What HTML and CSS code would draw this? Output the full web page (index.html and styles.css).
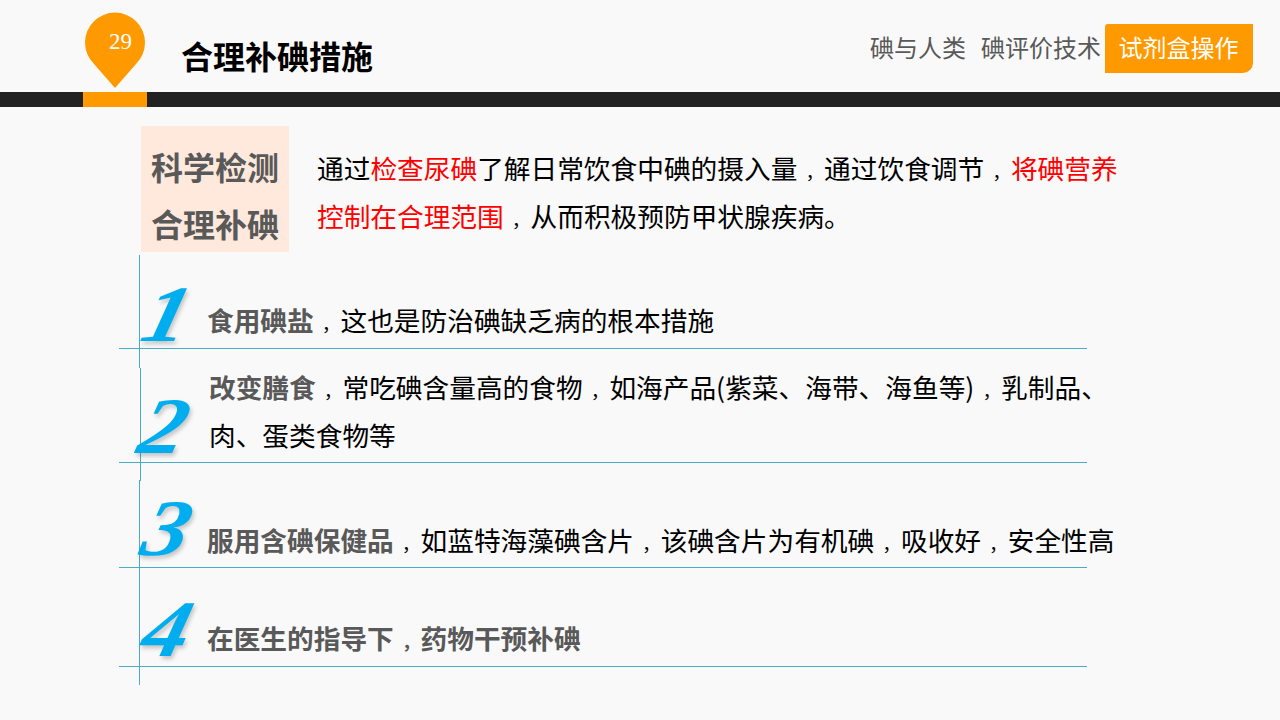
FILE: index.html
```html
<!DOCTYPE html>
<html lang="zh-CN">
<head>
<meta charset="utf-8">
<title>合理补碘措施</title>
<link rel="stylesheet" href="styles.css">
</head>
<body>
<header class="header">
  <div class="pin">
    <svg class="pin-shape" width="60" height="76" viewBox="0 0 60 76"><path d="M30 76 L9 52 A30 30 0 1 1 51 52 Z" fill="#ff9900"/></svg>
    <span class="pin-num">29</span>
  </div>
  <h1 class="title">合理补碘措施</h1>
  <nav class="nav">
    <span class="nav-item">碘与人类</span>
    <span class="nav-item">碘评价技术</span>
    <span class="nav-active">试剂盒操作</span>
  </nav>
</header>
<div class="bar"><span class="bar-mark"></span></div>
<main class="main">
  <section class="intro">
    <div class="badge">科学检测<br>合理补碘</div>
    <p class="intro-text">通过<em class="red">检查尿碘</em>了解日常饮食中碘的摄入量<i class="cm">，</i>通过饮食调节<i class="cm">，</i><em class="red">将碘营养<br>控制在合理范围</em><i class="cm">，</i>从而积极预防甲状腺疾病。</p>
  </section>
  <section class="list">
    <span class="vline vline-a"></span>
    <span class="vline vline-b"></span>
    <span class="vline vline-c"></span>
    <div class="row row-1"><span class="num">1</span><p class="row-text"><b>食用碘盐</b><i class="cm">，</i>这也是防治碘缺乏病的根本措施</p></div>
    <div class="row row-2"><span class="num">2</span><p class="row-text"><b>改变膳食</b><i class="cm">，</i>常吃碘含量高的食物<i class="cm">，</i>如海产品(紫菜、海带、海鱼等)<i class="cm">，</i>乳制品、<br>肉、蛋类食物等</p></div>
    <div class="row row-3"><span class="num">3</span><p class="row-text"><b>服用含碘保健品</b><i class="cm">，</i>如蓝特海藻碘含片<i class="cm">，</i>该碘含片为有机碘<i class="cm">，</i>吸收好<i class="cm">，</i>安全性高</p></div>
    <div class="row row-4"><span class="num">4</span><p class="row-text"><b>在医生的指导下<i class="cm">，</i>药物干预补碘</b></p></div>
  </section>
</main>
</body>
</html>
```
FILE: styles.css
```css
* { box-sizing: border-box; }
html, body { margin: 0; padding: 0; }
body {
  width: 1280px;
  height: 720px;
  overflow: hidden;
  background: #f9f9f9;
  color: #000;
  font-family: "Noto Sans CJK SC", "Liberation Sans", sans-serif;
}
p, h1 { margin: 0; }
em { font-style: normal; }
.cm {
  font-style: normal;
  font-size: 0.7em;
  line-height: 1;
  padding-left: 0.43em;
}

.header {
  height: 92px;
  display: flex;
  align-items: flex-start;
  padding-left: 85px;
  padding-right: 27px;
}
.pin {
  position: relative;
  width: 60px;
  height: 76px;
  margin-top: 12px;
  flex: none;
}
.pin-shape { display: block; }
.pin-num {
  position: absolute;
  left: 24px;
  top: 17px;
  font: 23px/26px "Liberation Serif", serif;
  color: #fff;
}
.title {
  margin-left: 36px;
  margin-top: 32px;
  font-size: 32px;
  line-height: 46px;
  font-weight: 700;
}
.nav {
  margin-left: auto;
  margin-top: 24px;
  display: flex;
  align-items: flex-start;
  font-size: 24px;
  line-height: 45px;
  color: #595959;
}
.nav-item { margin-right: 15px; }
.nav-item + .nav-item { margin-right: 4px; }
.nav-active {
  width: 148px;
  height: 49px;
  padding-right: 1px;
  text-align: center;
  color: #fff;
  background: #ff9900;
  border-radius: 3px 0 10px 0;
}

.bar { height: 15px; background: #222; }
.bar-mark {
  display: block;
  width: 64px;
  height: 15px;
  margin-left: 83px;
  background: #ff9900;
}

.main { padding: 19px 0 0 119px; }
.intro { display: flex; margin-left: 22px; }
.badge {
  width: 148px;
  height: 126px;
  flex: none;
  padding-top: 12px;
  text-align: center;
  font-size: 32px;
  line-height: 57px;
  font-weight: 700;
  color: #595959;
  background: #fee9dc;
}
.intro-text {
  margin-left: 28px;
  margin-top: 18px;
  font-size: 26.7px;
  line-height: 48px;
  white-space: nowrap;
}
.red { color: #ff0000; }

.list {
  position: relative;
  width: 968px;
  margin-top: 3px;
}
.vline {
  position: absolute;
  width: 1px;
  background: #4bacc6;
}
.vline-a { left: 20px; top: 0; height: 113px; }
.vline-b { left: 21px; top: 113px; height: 113px; }
.vline-c { left: 20px; top: 225px; height: 205px; }
.row {
  display: flex;
  border-bottom: 1px solid #4bacc6;
  white-space: nowrap;
}
.row-1 { height: 94px; }
.row-2 { height: 114px; }
.row-3 { height: 105px; }
.row-4 { height: 99px; }
.num {
  display: block;
  width: 88px;
  height: 80px;
  flex: none;
  padding-left: 28px;
  font-family: "Liberation Serif", serif;
  font-weight: 700;
  font-style: italic;
  font-size: 80px;
  line-height: 78px;
  color: #00adef;
  text-shadow: 2px 3px 4px rgba(0, 0, 0, 0.22);
  transform: skewX(-14deg) scaleX(1.15);
}
.row-1 .num { margin-top: 20px; }
.row-2 .num { margin-top: 38px; margin-left: -3px; margin-right: 3px; }
.row-3 .num { margin-top: 26px; }
.row-4 .num { margin-top: 22px; }
.row-text {
  font-size: 26.7px;
  line-height: 47px;
}
.row-text b { color: #595959; font-weight: 700; }
.row-1 .row-text { padding-top: 41px; }
.row-2 .row-text { padding-top: 14px; margin-left: 2px; line-height: 47.5px; }
.row-3 .row-text { padding-top: 53px; }
.row-4 .row-text { padding-top: 46px; }
```
